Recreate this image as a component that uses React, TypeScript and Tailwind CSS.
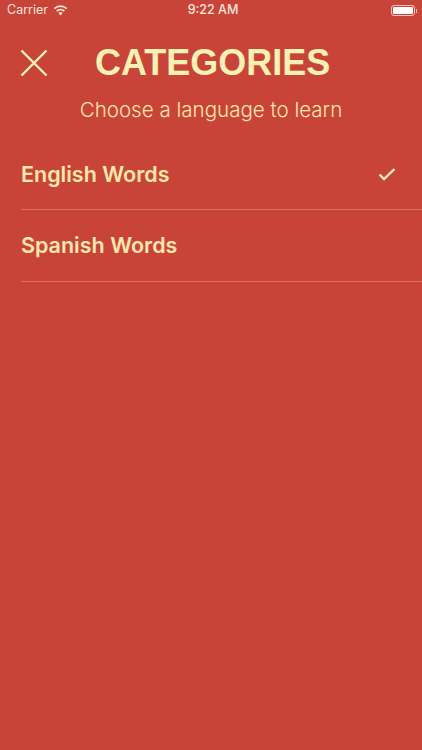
const rows = [
  { label: "English Words", checked: true },
  { label: "Spanish Words", checked: false },
];

export default function App() {
  return (
    <div className="flex h-[750px] w-full flex-col bg-[#c94438] font-['Inter',sans-serif] text-[#f8f1b4]">
      <div className="flex h-[21px] items-center justify-between pl-[7px] pr-[5px] text-[12.5px] text-[#fbe6d8]">
        <div className="flex w-[120px] items-center gap-[5px]">
          <span>Carrier</span>
          <svg width="15" height="11" viewBox="0 0 14 11" fill="currentColor">
            <path d="M7 10.5 4.9 8.1a3 3 0 0 1 4.2 0L7 10.5Z" />
            <path d="M3.7 6.8 2.6 5.5a6.6 6.6 0 0 1 8.8 0l-1.1 1.3a4.9 4.9 0 0 0-6.6 0Z" />
            <path d="M1.4 4.2.3 2.9a10 10 0 0 1 13.4 0l-1.1 1.3a8.3 8.3 0 0 0-11.2 0Z" />
          </svg>
        </div>
        <span className="pl-[2px] font-medium">9:22 AM</span>
        <div className="flex w-[120px] items-center justify-end">
          <div className="flex h-[11px] w-[24px] items-center rounded-[3px] border border-[#f3c4bc] p-[1px]">
            <div className="h-full w-full rounded-[1px] bg-white" />
          </div>
          <div className="ml-[1px] h-[4px] w-[1px] bg-[#f3c4bc]" />
        </div>
      </div>

      <div className="mt-[20px] flex h-[44px] items-center">
        <svg className="ml-[20px] shrink-0" width="28" height="28" viewBox="0 0 28 28" fill="none" stroke="currentColor" strokeWidth="2.4">
          <path d="M1.5 1.5 26.5 26.5M26.5 1.5 1.5 26.5" />
        </svg>
        <h1 className="ml-[47px] font-['Liberation_Sans',sans-serif] text-[36px] leading-none font-bold whitespace-nowrap">CATEGORIES</h1>
      </div>

      <p className="mt-[11px] text-center text-[20.55px] leading-[28px] font-light text-[#fbe8ac]">Choose a language to learn</p>

      <div className="mt-[14.5px] pl-[21px]">
        {rows.map((row) => (
          <div key={row.label} className="flex h-[71.5px] items-center justify-between border-b border-[#d96f62] pr-[26px]">
            <span className="text-[21.5px] font-semibold text-[#fbe8ac]">{row.label}</span>
            {row.checked && (
              <svg width="18" height="14" viewBox="0 0 18 14" fill="none" stroke="currentColor" strokeWidth="2.4">
                <path d="M1.5 7.5 6 12 16.5 2" />
              </svg>
            )}
          </div>
        ))}
      </div>
    </div>
  );
}
